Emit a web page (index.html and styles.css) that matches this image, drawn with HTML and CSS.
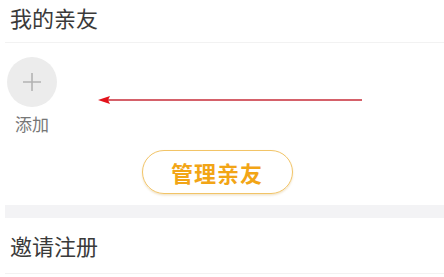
FILE: index.html
```html
<!DOCTYPE html>
<html lang="zh">
<head>
<meta charset="utf-8">
<link rel="stylesheet" href="styles.css">
</head>
<body>
<div class="page">
  <div class="section-head">我的亲友</div>
  <div class="friends">
    <div class="friend-add">
      <div class="add-circle">
        <svg width="18" height="18" viewBox="0 0 18 18"><path d="M9 0V18M0 9H18" stroke="#b3b3b3" stroke-width="1.6" fill="none"/></svg>
      </div>
      <div class="add-label">添加</div>
    </div>
  </div>
  <div class="btn-wrap"><div class="manage-btn">管理亲友</div></div>
  <div class="band"></div>
  <div class="row">邀请注册</div>
  <svg class="arrow" width="266" height="10" viewBox="0 0 266 10">
    <line x1="8" y1="5" x2="264" y2="5" stroke="#d5616a" stroke-width="1.8"/>
    <path d="M0 5L12 1L10 5L12 9Z" fill="#e3121b"/>
  </svg>
</div>
</body>
</html>
```
FILE: styles.css
```css
* { box-sizing: border-box; margin: 0; padding: 0; }
body { margin: 0; background: #fff; font-family: "Noto Sans CJK SC", "Noto Sans", sans-serif; }
.page { position: relative; width: 444px; height: 277px; overflow: hidden; background: #fff; }
.section-head {
  margin-left: 5px; padding-left: 5px; height: 43px; line-height: 34px;
  font-size: 22px; color: #3a3a3a; border-bottom: 1px solid #f2f2f2;
}
.friends { padding: 14px 0 0 7px; display: flex; }
.friend-add { display: flex; flex-direction: column; align-items: center; width: 50px; }
.add-circle {
  width: 50px; height: 50px; border-radius: 50%; background: #ececec;
  display: flex; align-items: center; justify-content: center;
}
.add-label { margin-top: 6px; line-height: 22px; font-size: 17px; color: #777; white-space: nowrap; }
.btn-wrap { display: flex; justify-content: center; padding-right: 10px; margin-top: 15px; }
.manage-btn {
  width: 151px; height: 44px; border-radius: 22px; border: 1.5px solid #f2c467;
  box-shadow: 0 1.5px 2px rgba(200, 150, 60, 0.25);
  display: flex; align-items: center; justify-content: center;
  font-size: 22px; font-weight: 700; color: #f2a516; letter-spacing: 1px;
}
.band { margin-top: 11px; margin-left: 5px; height: 13px; background: #f3f3f5; }
.row {
  margin-left: 5px; padding-left: 5px; height: 56px; line-height: 55px;
  font-size: 22px; color: #3a3a3a; border-bottom: 1px solid #f2f2f2;
}
.arrow { position: absolute; left: 98px; top: 95px; }
```
